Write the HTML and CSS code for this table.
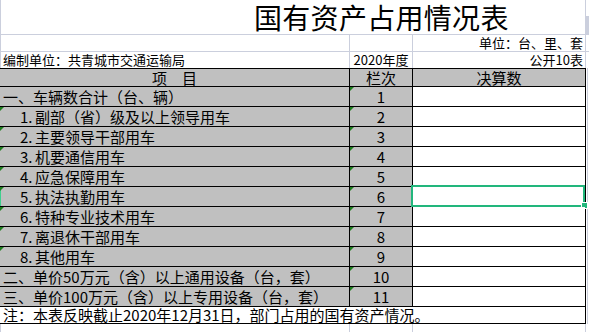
FILE: index.html
```html
<!DOCTYPE html>
<html lang="zh-CN">
<head>
<meta charset="utf-8">
<title>国有资产占用情况表</title>
<link rel="stylesheet" href="styles.css">
</head>
<body>
<div class="page">
  <div class="top">
    <div class="title">国有资产占用情况表</div>
    <div class="tc"></div>
    <div class="tc first"></div>
    <div class="tc"></div>
    <div class="tc right">单位：台、里、套</div>
    <div class="tc"></div>
    <div class="tc first">编制单位：共青城市交通运输局</div>
    <div class="tc center">2020年度</div>
    <div class="tc right">公开10表</div>
    <div class="tc"></div>
  </div>
  <div class="tblwrap">
    <div class="tbl">
      <div class="hd">项　目</div>
      <div class="hd">栏次</div>
      <div class="hd val-hd">决算数</div>

      <div class="item">一、车辆数合计（台、辆）</div>
      <div class="no flag">1</div>
      <div class="val"></div>

      <div class="item sub flag"><span class="num">1.</span>副部（省）级及以上领导用车</div>
      <div class="no flag">2</div>
      <div class="val"></div>

      <div class="item sub flag"><span class="num">2.</span>主要领导干部用车</div>
      <div class="no flag">3</div>
      <div class="val"></div>

      <div class="item sub flag"><span class="num">3.</span>机要通信用车</div>
      <div class="no flag">4</div>
      <div class="val"></div>

      <div class="item sub flag"><span class="num">4.</span>应急保障用车</div>
      <div class="no flag">5</div>
      <div class="val"></div>

      <div class="item sub flag row-sel"><span class="num">5.</span>执法执勤用车</div>
      <div class="no flag">6</div>
      <div class="val"><div class="selbox"><span class="handle"></span></div></div>

      <div class="item sub flag"><span class="num">6.</span>特种专业技术用车</div>
      <div class="no flag">7</div>
      <div class="val"></div>

      <div class="item sub flag"><span class="num">7.</span>离退休干部用车</div>
      <div class="no flag">8</div>
      <div class="val"></div>

      <div class="item sub flag"><span class="num">8.</span>其他用车</div>
      <div class="no flag">9</div>
      <div class="val"></div>

      <div class="item">二、单价50万元（含）以上通用设备（台，套）</div>
      <div class="no flag">10</div>
      <div class="val"></div>

      <div class="item">三、单价100万元（含）以上专用设备（台，套）</div>
      <div class="no flag">11</div>
      <div class="val"></div>

      <div class="note">注：本表反映截止2020年12月31日，部门占用的国有资产情况。</div>
    </div>
    <div class="edge"></div>
  </div>
  <div class="bottom">
    <div class="bc first"></div>
    <div class="bc"></div>
    <div class="bc"></div>
    <div class="bc"></div>
  </div>
</div>
</body>
</html>
```

FILE: styles.css
```css
html, body {
  margin: 0;
  padding: 0;
  background: #ffffff;
}

body {
  font-family: "Noto Sans CJK SC", sans-serif;
  color: #000000;
}

.page {
  width: 589px;
  height: 332px;
  overflow: hidden;
  background: #ffffff;
}

/* top, un-bordered sheet area */
.top {
  display: grid;
  grid-template-columns: 349px 62px 172px 1fr;
  grid-template-rows: 34px 16px 16px;
  gap: 1px;
  background: #cbcfdd;
}

.title {
  grid-column: 1 / 4;
  background: #ffffff;
  box-shadow: inset 1px 0 0 #cbcfdd;
  font-size: 28px;
  line-height: 34px;
  height: 34px;
  padding-left: 254px;
  white-space: nowrap;
  letter-spacing: 0.3px;
}

.tc {
  background: #ffffff;
  font-size: 13px;
  line-height: 16px;
  height: 16px;
  white-space: nowrap;
  padding: 0 0 0 3px;
}

.tc.first {
  box-shadow: inset 1px 0 0 #cbcfdd;
}

.tc.center {
  text-align: center;
  padding: 0;
}

.tc.right {
  text-align: right;
  padding: 0 2px 0 0;
}

/* bordered table */
.tblwrap {
  display: flex;
}

.tbl {
  display: grid;
  grid-template-columns: 349px 62px 172px;
  grid-template-rows: 17px repeat(11, 19px) 16px;
  gap: 1px;
  background: #000000;
  border-top: 1px solid #000000;
  border-right: 1px solid #000000;
  border-bottom: 1px solid #000000;
  font-size: 15px;
}

.edge {
  flex: 1;
  background: linear-gradient(90deg, #ffffff 0 1px, #cbcfdd 1px 2px, #ffffff 2px);
}

.hd {
  background: #c0c0c0;
  text-align: center;
  line-height: 17px;
  white-space: nowrap;
}

.item {
  background: #c0c0c0;
  line-height: 19px;
  padding-left: 3px;
  white-space: nowrap;
  position: relative;
}

.item.sub {
  padding-left: 20px;
}

.num {
  display: inline-block;
  width: 15px;
}

.item.row-sel {
  box-shadow: inset 1px 0 0 #3fd08f;
}

.no {
  background: #c0c0c0;
  text-align: center;
  line-height: 19px;
  position: relative;
}

.val {
  background: #ffffff;
  position: relative;
}

.flag::before {
  content: "";
  position: absolute;
  left: 0;
  top: 0;
  width: 0;
  height: 0;
  border-top: 4px solid #1f7f1f;
  border-right: 4px solid transparent;
}

.note {
  grid-column: 1 / -1;
  background: #ffffff;
  line-height: 16px;
  padding-left: 3px;
  white-space: nowrap;
}

/* active cell selection */
.selbox {
  position: absolute;
  left: -2px;
  top: -2px;
  right: 0;
  bottom: -1px;
  border: 2px solid #22b67c;
}

.handle {
  position: absolute;
  right: -4px;
  bottom: -3px;
  width: 5px;
  height: 5px;
  background: #22b67c;
  box-shadow: 0 0 0 1px #ffffff;
}

/* empty sheet below table */
.bottom {
  display: grid;
  grid-template-columns: 349px 62px 172px 1fr;
  column-gap: 1px;
  height: 8px;
  background: #cbcfdd;
}

.bc {
  background: #ffffff;
}

.bc.first {
  box-shadow: inset 1px 0 0 #cbcfdd;
}
```
